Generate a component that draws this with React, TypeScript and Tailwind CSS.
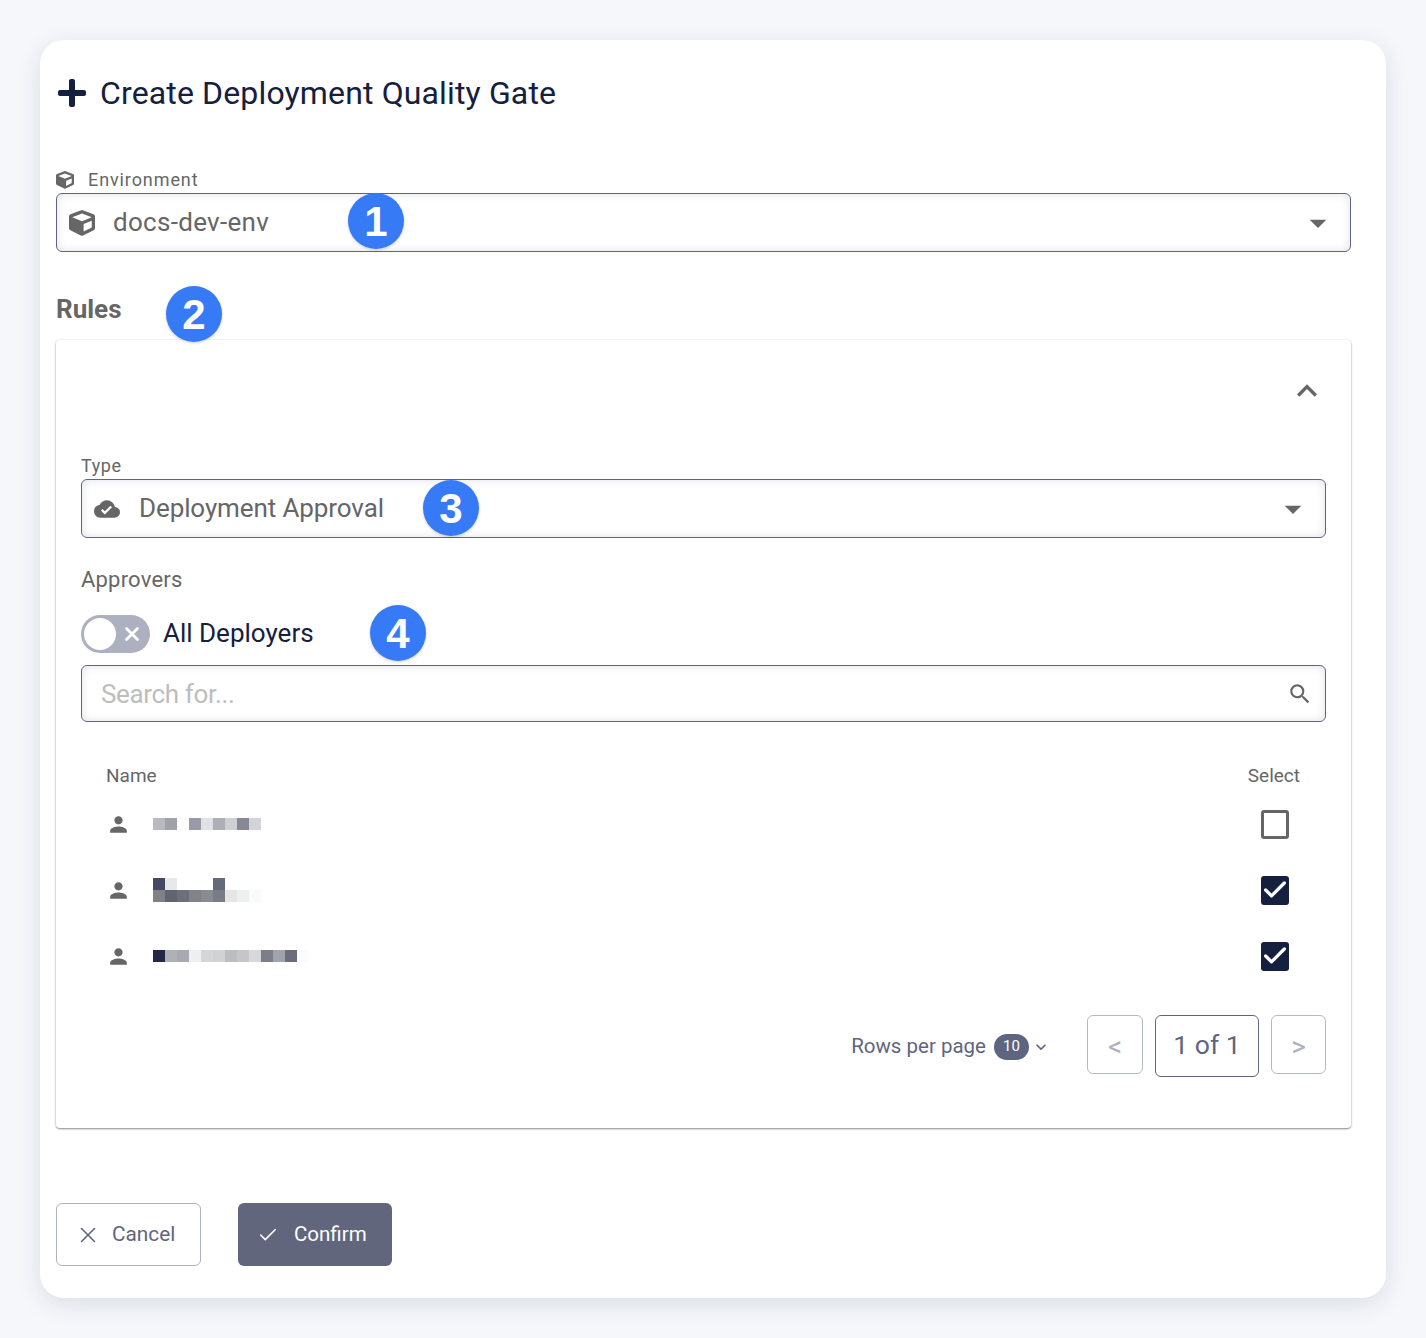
import React from "react";
import { FaCube, FaPlus } from "react-icons/fa";
import { MdArrowDropDown, MdCloudDone, MdPerson, MdSearch, MdKeyboardArrowUp, MdKeyboardArrowDown } from "react-icons/md";
import { X, Check } from "lucide-react";

const Badge = ({ n, className }: { n: string; className: string }) => (
  <span className={`absolute flex h-14 w-14 items-center justify-center rounded-full bg-[#367bf5] text-[42px] font-bold text-white shadow-[0_1px_3px_rgba(0,0,0,0.2)] font-['Liberation_Sans',sans-serif] ${className}`}>
    {n}
  </span>
);

const Cells = ({ colors }: { colors: string[] }) => (
  <div className="flex">
    {colors.map((c, i) => (
      <span key={i} className="h-3 w-3" style={{ background: c }} />
    ))}
  </div>
);

const rows = [
  { lines: [["#b9bac0", "#a0a2a8", "#fdfdfd", "#989ba5", "#e0e1e4", "#adafb5", "#cfd0d4", "#868896", "#d3d4d7"]], checked: false },
  {
    lines: [
      ["#414a62", "#e8e8e8", "#ffffff", "#ffffff", "#ffffff", "#636a7c"],
      ["#808186", "#62646f", "#6d6f7a", "#828388", "#8a8b90", "#797b85", "#e6e6e6", "#eeeff0", "#fafafa"],
    ],
    checked: true,
  },
  { lines: [["#232947", "#b0b1b6", "#a8aab2", "#eeeff1", "#d5d6d8", "#d1d2d4", "#bcbdc1", "#c5c6ca", "#d8d8da", "#7d7f88", "#a1a3ab", "#6b6d7c", "#fcfcfc"]], checked: true },
];

const fieldClass = "rounded-[6px] border border-[#5e6580] shadow-[inset_0_0_8px_rgba(60,70,110,0.16)]";

export default function App() {
  return (
    <div className="min-h-[1338px] bg-[#f5f7fb] px-10 pt-10 pb-10 font-['Roboto',sans-serif]">
      <div className="relative h-[1258px] w-[1346px] rounded-[24px] bg-white pl-4 pr-[35px] shadow-[0_6px_24px_rgba(30,40,70,0.12)]">
        <div className="flex h-[106px] items-center gap-[12px] pb-[1px]">
          <FaPlus className="text-[32px] text-[#15203f]" />
          <h1 className="text-[32px] font-normal tracking-[0.14px] text-[#15203f]">Create Deployment Quality Gate</h1>
        </div>

        <div className="relative">
          <div className="mt-[23px] flex h-[21px] items-center gap-[14px] text-[#666]">
            <FaCube className="text-[18px]" />
            <span className="text-[18px] tracking-[0.9px]">Environment</span>
          </div>
          <div className={`mt-[3px] flex h-[59px] items-center justify-between pl-[12px] pr-[12px] ${fieldClass}`}>
            <div className="flex items-center gap-[18px] text-[#666]">
              <FaCube className="text-[26px]" />
              <span className="text-[26px] tracking-[0.3px]">docs-dev-env</span>
            </div>
            <MdArrowDropDown className="text-[40px] text-[#666]" />
          </div>
          <Badge n="1" className="left-[292px] top-[24px]" />
        </div>

        <div className="relative mt-[43px] h-[29px] text-[26px] font-bold leading-[29px] text-[#666]">
          Rules
          <Badge n="2" className="left-[110px] top-[-9px]" />
        </div>

        <section className="mt-[16px] h-[788px] rounded-[4px] bg-white px-[25px] shadow-[0_1px_2px_rgba(0,0,0,0.45),0_0_3px_rgba(0,0,0,0.07)]">
          <div className="flex h-[104px] justify-end pt-[31px]">
            <MdKeyboardArrowUp className="-mr-[1px] text-[40px] text-[#666]" />
          </div>
          <div className="relative">
            <div className="mt-[10px] h-[24px] text-[18px] leading-[24px] tracking-[0.6px] text-[#666]">Type</div>
            <div className={`mt-[1px] flex h-[59px] items-center justify-between pl-[12px] pr-[12px] ${fieldClass}`}>
              <div className="flex items-center gap-[19px] text-[#666]">
                <MdCloudDone className="text-[26px]" />
                <span className="text-[26px] tracking-[-0.1px]">Deployment Approval</span>
              </div>
              <MdArrowDropDown className="text-[40px] text-[#666]" />
            </div>
            <Badge n="3" className="left-[342px] top-[26px]" />
          </div>

          <div className="mt-[28px] h-[28px] text-[22px] leading-[28px] tracking-[0.2px] text-[#666]">Approvers</div>

          <div className="relative mt-[21px] flex h-[38px] items-center gap-[13px]">
            <div className="flex h-[38px] w-[69px] items-center justify-between rounded-full bg-[#adb0bf] pl-[3px] pr-[7px]">
              <span className="h-[32px] w-[32px] rounded-full bg-white" />
              <X className="h-[22px] w-[22px] text-white" strokeWidth={3} />
            </div>
            <span className="pb-[2px] text-[26px] text-[#15203f]">All Deployers</span>
            <Badge n="4" className="left-[289px] top-[-10px]" />
          </div>

          <div className={`mt-[12px] flex h-[57px] items-center justify-between pl-[19px] pr-[12px] ${fieldClass}`}>
            <span className="pt-[2px] text-[26px] tracking-[-0.35px] text-[#bdbdbd]">Search for...</span>
            <MdSearch className="text-[26px] text-[#666]" />
          </div>

          <div className="mt-[43px] flex h-[22px] items-center justify-between pl-[25px] pr-[26px] text-[19px] text-[#666]">
            <span>Name</span>
            <span>Select</span>
          </div>

          <div className="mt-[22px] flex flex-col gap-[36px]">
            {rows.map((r, i) => (
              <div key={i} className="flex h-[30px] items-center justify-between pl-[25px] pr-[37px]">
                <div className="flex items-center gap-[22px]">
                  <MdPerson className="text-[25px] text-[#666]" />
                  <div className="flex flex-col">
                    {r.lines.map((l, j) => (
                      <Cells key={j} colors={l} />
                    ))}
                  </div>
                </div>
                {r.checked ? (
                  <span className="flex h-[29px] w-[28px] items-center justify-center rounded-[3px] bg-[#15203f]">
                    <Check className="h-[28px] w-[28px] shrink-0 text-white" strokeWidth={2.8} />
                  </span>
                ) : (
                  <span className="h-[29px] w-[28px] rounded-[3px] border-[3px] border-[#666]" />
                )}
              </div>
            ))}
          </div>

          <div className="mt-[44px] flex items-start justify-end">
            <div className="flex h-[59px] items-center pt-[4px]">
              <span className="text-[20.5px] text-[#5e6580]">Rows per page</span>
              <span className="ml-[8px] flex h-[26px] w-[35px] items-center justify-center rounded-full bg-[#5e6580] text-[15px] text-white">10</span>
              <MdKeyboardArrowDown className="ml-[2px] text-[20px] text-[#5e6580]" />
            </div>
            <span className="ml-[36px] flex h-[59px] w-[56px] items-center justify-center rounded-[6px] border border-[#b4b9ca] pt-[4px] text-[28px] text-[#adb0bf]">&lt;</span>
            <span className="ml-[12px] flex h-[62px] w-[104px] items-center justify-center rounded-[6px] border border-[#5e6580] pb-[2px] text-[26.5px] text-[#5e6580]">1 of 1</span>
            <span className="ml-[12px] flex h-[59px] w-[55px] items-center justify-center rounded-[6px] border border-[#b4b9ca] pt-[4px] text-[28px] text-[#adb0bf]">&gt;</span>
          </div>
        </section>

        <div className="mt-[75px] flex gap-[37px]">
          <button className="flex h-[63px] w-[145px] items-center gap-[11px] rounded-[6px] border border-[#adb0bf] bg-white pl-[18px] text-[20.8px] text-[#5e6580]">
            <X className="h-[26px] w-[26px]" strokeWidth={1.4} />
            Cancel
          </button>
          <button className="flex h-[63px] w-[154px] items-center gap-[15px] rounded-[6px] bg-[#61667d] pl-[19px] text-[20.5px] text-white">
            <Check className="h-[22px] w-[22px]" strokeWidth={1.7} />
            Confirm
          </button>
        </div>
      </div>
    </div>
  );
}
